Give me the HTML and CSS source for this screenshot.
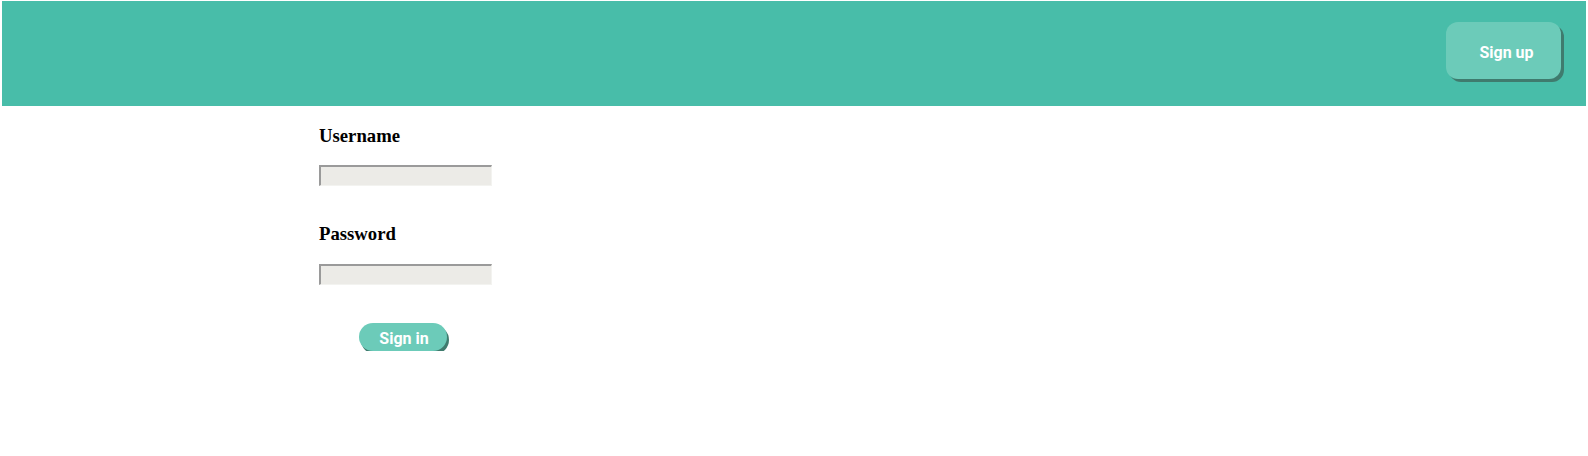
FILE: index.html
```html
<!DOCTYPE html>
<html>
<head>
<meta charset="utf-8">
<link rel="stylesheet" href="styles.css">
</head>
<body>
<div class="page">
  <header class="topbar">
    <button class="btn btn-signup">Sign up</button>
  </header>
  <form class="login">
    <h3 class="label">Username</h3>
    <input class="field" type="text">
    <h3 class="label label-pass">Password</h3>
    <input class="field" type="password">
    <button class="btn btn-signin" type="button">Sign in</button>
  </form>
</div>
</body>
</html>
```

FILE: styles.css
```css
html, body {
  margin: 0;
  padding: 0;
  background: #ffffff;
}
.page {
  padding: 1px 2px 0 2px;
}
.topbar {
  background: #48bda9;
  height: 105px;
  display: flex;
  justify-content: flex-end;
  align-items: flex-start;
  padding: 21px 25px 0 0;
  box-sizing: border-box;
}
.btn {
  font-family: Roboto, "Liberation Sans", sans-serif;
  font-weight: 700;
  font-size: 16px;
  color: #ffffff;
  background: #6ccbb9;
  border: none;
  box-shadow: 3px 3px 0 #3f7b6e;
  cursor: pointer;
  padding: 0;
}
.btn-signup {
  width: 115px;
  height: 57px;
  border-radius: 12px;
  padding: 4px 0 0 6px;
}
.login {
  display: flex;
  flex-direction: column;
  align-items: flex-start;
  padding-left: 317px;
}
.label {
  font-family: "Liberation Serif", "Times New Roman", serif;
  font-size: 18.72px;
  font-weight: 700;
  margin: 19px 0 18px 0;
  color: #000;
}
.label-pass {
  margin-top: 37px;
  margin-bottom: 19px;
}
.field {
  width: 173px;
  height: 21px;
  box-sizing: border-box;
  margin: 0;
  padding: 0;
  background: #ecebe7;
  border-style: solid;
  border-width: 2px 1px 1px 2px;
  border-color: #9a9a9a #f3f3f0 #f3f3f0 #9a9a9a;
}
.btn-signin {
  margin: 38px 0 0 40px;
  width: 88px;
  height: 28px;
  border-radius: 14px;
  padding: 2px 0 0 2px;
  box-shadow: 2px 3px 0 #3f7b6e;
}
```
